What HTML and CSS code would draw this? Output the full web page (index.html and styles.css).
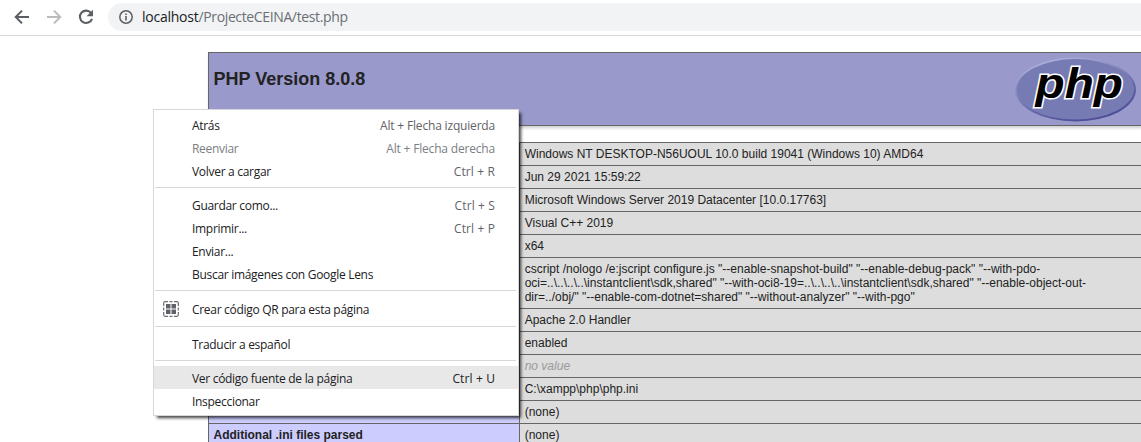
FILE: index.html
```html
<!DOCTYPE html>
<html lang="es">
<head>
<meta charset="utf-8">
<title>PHP 8.0.8 - phpinfo()</title>
<link rel="stylesheet" href="styles.css">
</head>
<body>
<header class="toolbar">
  <svg class="nav" viewBox="0 0 16 16"><path d="M15 8H2M8 1.6 1.7 8 8 14.4" fill="none" stroke="#5b5e63" stroke-width="2"/></svg>
  <svg class="nav" viewBox="0 0 16 16"><path d="M1 8h13M8 1.6 14.3 8 8 14.4" fill="none" stroke="#babcbe" stroke-width="2"/></svg>
  <svg class="nav" viewBox="0 0 16 16"><path d="M13.2 4.2A6.2 6.2 0 1 0 14 9.8" fill="none" stroke="#5b5e63" stroke-width="2.1"/><path d="M15 .8v6.4H8.6z" fill="#5b5e63"/></svg>
  <div class="address">
    <svg class="info" viewBox="0 0 14 14"><circle cx="7" cy="7" r="6.2" fill="none" stroke="#5b5e63" stroke-width="1.5"/><path d="M7 6v4.4M7 3.5v1.6" stroke="#5b5e63" stroke-width="1.6"/></svg>
    <span class="url"><span class="host">localhost</span>/ProjecteCEINA/test.php</span>
  </div>
</header>
<main class="page">
  <section class="banner">
    <h1>PHP Version 8.0.8</h1>
    <svg class="logo" viewBox="0 0 121 65">
      <defs>
        <linearGradient id="rim" x1="0.25" y1="0" x2="0.75" y2="1"><stop offset="0" stop-color="#b2b6df"/><stop offset=".4" stop-color="#8286bd"/><stop offset=".65" stop-color="#6265a5"/><stop offset="1" stop-color="#484892"/></linearGradient>
      </defs>
      <ellipse cx="60.5" cy="32.5" rx="60.5" ry="32" fill="url(#rim)"/>
      <ellipse cx="60.3" cy="32.3" rx="58.7" ry="30.2" fill="#777bb3"/>
      <text class="logo-text" transform="translate(20.5 40.5) scale(1.11 1)">php</text>
    </svg>
  </section>
  <section class="info-table">
    <div class="row"><div class="key"></div><div class="value">Windows NT DESKTOP-N56UOUL 10.0 build 19041 (Windows 10) AMD64</div></div>
    <div class="row"><div class="key"></div><div class="value">Jun 29 2021 15:59:22</div></div>
    <div class="row"><div class="key"></div><div class="value">Microsoft Windows Server 2019 Datacenter [10.0.17763]</div></div>
    <div class="row"><div class="key"></div><div class="value">Visual C++ 2019</div></div>
    <div class="row"><div class="key"></div><div class="value">x64</div></div>
    <div class="row"><div class="key"></div><div class="value">cscript /nologo /e:jscript configure.js "--enable-snapshot-build" "--enable-debug-pack" "--with-pdo-<br>oci=..\..\..\..\instantclient\sdk,shared" "--with-oci8-19=..\..\..\..\instantclient\sdk,shared" "--enable-object-out-<br>dir=../obj/" "--enable-com-dotnet=shared" "--without-analyzer" "--with-pgo"</div></div>
    <div class="row"><div class="key"></div><div class="value">Apache 2.0 Handler</div></div>
    <div class="row"><div class="key"></div><div class="value">enabled</div></div>
    <div class="row"><div class="key"></div><div class="value none">no value</div></div>
    <div class="row"><div class="key"></div><div class="value">C:\xampp\php\php.ini</div></div>
    <div class="row"><div class="key"></div><div class="value">(none)</div></div>
    <div class="row"><div class="key">Additional .ini files parsed</div><div class="value">(none)</div></div>
  </section>
</main>
<nav class="menu">
  <div class="item"><span>Atrás</span><kbd>Alt + Flecha izquierda</kbd></div>
  <div class="item disabled"><span>Reenviar</span><kbd>Alt + Flecha derecha</kbd></div>
  <div class="item"><span>Volver a cargar</span><kbd class="short">Ctrl + R</kbd></div>
  <hr>
  <div class="item"><span>Guardar como...</span><kbd class="short">Ctrl + S</kbd></div>
  <div class="item"><span>Imprimir...</span><kbd class="short">Ctrl + P</kbd></div>
  <div class="item"><span>Enviar...</span></div>
  <div class="item"><span>Buscar imágenes con Google Lens</span></div>
  <hr>
  <div class="item with-icon">
    <svg class="qr" viewBox="0 0 16 16"><path d="M.7 5V2.200Q.7.7 2.200.7H5M6.500.7h3M11 .7h2.800q1.500 0 1.500 1.500V5M15.300 6.500v3M15.300 11v2.800q0 1.500-1.500 1.500H11M9.500 15.300h-3M5 15.300H2.200q-1.500 0-1.500-1.500V11M.7 9.500v-3" fill="none" stroke="#6b6f74" stroke-width="1.200"/><path d="M3 3h4.500v4.500H3zM8.500 3H13v4.500H8.500zM3 8.500h4.500V13H3zM8.500 8.500H13V13H8.500z" fill="#5f6368"/></svg>
    <span>Crear código QR para esta página</span>
  </div>
  <hr>
  <div class="item"><span>Traducir a español</span></div>
  <hr>
  <div class="item active"><span>Ver código fuente de la página</span><kbd class="short">Ctrl + U</kbd></div>
  <div class="item"><span>Inspeccionar</span></div>
</nav>
</body>
</html>
```
FILE: styles.css
```css
* { box-sizing: border-box; }
body { margin: 0; height: 442px; overflow: hidden; background: #fff; color: #222; font-family: "Liberation Sans", Arial, sans-serif; }

.toolbar { display: flex; align-items: center; height: 36px; padding: 0 0 2px 14px; gap: 16px; border-bottom: 1px solid #d5d7da; }
.nav { width: 16px; height: 16px; flex: none; }
.address { display: flex; align-items: center; flex: 1; height: 28px; margin-left: -2px; padding-left: 11px; gap: 9px; background: #f1f3f4; border-radius: 14px 0 0 14px; }
.info { width: 14px; height: 14px; }
.url { font: 14px/20px "Open Sans", sans-serif; letter-spacing: -0.37px; color: #6b6f74; white-space: nowrap; }
.host { color: #202124; letter-spacing: -0.24px; }

.page { margin: 16px 0 0 208px; }
.banner { display: flex; justify-content: space-between; height: 74px; padding: 4px 5px 0 4.500px; background: #9999cc; border: 1px solid #666; border-right: 0; box-shadow: 1px 2px 3px #ccc; }
h1 { margin: 11px 0 0; font-size: 18px; line-height: 22px; }
.logo { width: 121px; height: 65px; overflow: visible; }
.logo-text { font: italic 700 43px "Liberation Sans", Arial, sans-serif; fill: #000; stroke: #fff; stroke-width: 3px; paint-order: stroke; }

.info-table { margin-top: 16px; border-left: 1px solid #666; border-top: 1px solid #666; font-size: 12px; line-height: 14px; }
.row { display: grid; grid-template-columns: 311px 1fr; border-bottom: 1px solid #666; }
.key { padding: 4px 4.500px; background: #ccccff; border-right: 1px solid #666; font-weight: 700; }
.value { padding: 4px 4.700px; background: #ddd; white-space: nowrap; }
.none { color: #999; font-style: italic; }

.menu { position: absolute; left: 153px; top: 109px; width: 366px; padding: 3px 0; background: #fff; border: 1px solid #d5d7da; box-shadow: 3px 3px 3px -1px rgba(0, 0, 0, .75); font: 12px/23px "Open Sans", sans-serif; letter-spacing: -0.3px; color: #202124; }
.item { display: flex; justify-content: space-between; height: 23px; padding: 1px 23px 0 38px; }
.item kbd { font: inherit; letter-spacing: -0.18px; color: #5f6368; }
.item .short { letter-spacing: 0.12px; }
.disabled, .disabled kbd { color: #7b7e82; }
.active { background: #e8e8e8; }
.active kbd { color: #202124; }
.with-icon { justify-content: flex-start; align-items: center; height: 25px; padding-left: 9px; gap: 13px; }
.qr { width: 16px; height: 16px; }
hr { height: 1px; margin: 5px 2px 5px 1px; border: 0; background: #d5d7da; }
```
